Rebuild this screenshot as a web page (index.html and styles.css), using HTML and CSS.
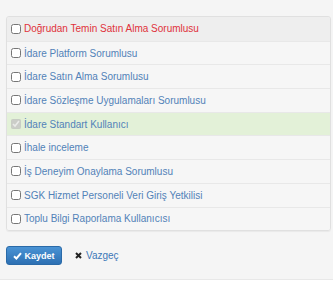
FILE: index.html
```html
<!DOCTYPE html>
<html>

<head>
    <meta name="viewport" content="width=device-width,initial-scale=1.0">
    <title>Roller</title>
    <link rel="stylesheet" href="styles.css">
</head>

<body>
    <div class="page">
        <div class="panel">
            <div class="row first"><label class="item danger"><input type="checkbox"> Doğrudan Temin Satın Alma Sorumlusu</label></div>
            <div class="row"><label class="item"><input type="checkbox"> İdare Platform Sorumlusu</label></div>
            <div class="row"><label class="item"><input type="checkbox"> İdare Satın Alma Sorumlusu</label></div>
            <div class="row"><label class="item"><input type="checkbox"> İdare Sözleşme Uygulamaları Sorumlusu</label></div>
            <div class="row success"><label class="item"><input type="checkbox" checked disabled> İdare Standart Kullanıcı</label></div>
            <div class="row"><label class="item"><input type="checkbox"> İhale inceleme</label></div>
            <div class="row"><label class="item"><input type="checkbox"> İş Deneyim Onaylama Sorumlusu</label></div>
            <div class="row"><label class="item"><input type="checkbox"> SGK Hizmet Personeli Veri Giriş Yetkilisi</label></div>
            <div class="row"><label class="item"><input type="checkbox"> Toplu Bilgi Raporlama Kullanıcısı</label></div>
        </div>

        <div class="actions">
            <button class="btn save">
                <svg class="check" width="9" height="8" viewBox="0 0 9 8"><path d="M1 4.2 L3.4 6.5 L8 1.2" fill="none" stroke="#ffffff" stroke-width="2"/></svg>
                Kaydet
            </button>
            <a class="cancel" href="#">
                <svg class="times" width="7" height="7" viewBox="0 0 7 7"><path d="M1 1 L6 6 M6 1 L1 6" stroke="#222222" stroke-width="2"/></svg>
                Vazgeç
            </a>
        </div>
    </div>
</body>

</html>
```

FILE: styles.css
```css
body {
    margin: 0;
    background-color: #ffffff;
    font-family: "Liberation Sans", Arial, sans-serif;
    font-size: 10px;
}

.page {
    background-color: #f5f5f5;
    border-bottom: 1px solid #e8e8e8;
    padding: 16px 2px 14px 6px;
}

.panel {
    border: 1px solid #e0e0e0;
    border-radius: 3px;
    box-shadow: 0 1px 1px rgba(0, 0, 0, 0.05);
    overflow: hidden;
}

.row {
    height: 22.7px;
    border-top: 1px solid #e8e8e8;
    display: flex;
    align-items: center;
    padding-left: 4px;
    background-color: #f6f6f6;
}

.row.first {
    border-top: none;
    height: 23.7px;
    background-color: #eeeeee;
}

.row.success {
    background-color: #e3f1d8;
}

.item {
    display: flex;
    align-items: center;
    color: #5282b8;
}

.item.danger {
    color: #e0323a;
}

.item input {
    width: 10px;
    height: 10px;
    margin: 0 3px 0 0;
}

.actions {
    display: flex;
    align-items: center;
    margin-top: 15px;
}

.btn {
    display: flex;
    align-items: center;
    justify-content: center;
    gap: 2px;
    font-family: "Liberation Sans", Arial, sans-serif;
    font-size: 9px;
    font-weight: bold;
    color: #ffffff;
    width: 56px;
    height: 19px;
    border: 1px solid #2a6aa8;
    border-radius: 3px;
    background-image: linear-gradient(#4a93d4, #2d70b3);
    padding: 0;
}

.cancel {
    display: flex;
    align-items: center;
    gap: 4px;
    margin-left: 13px;
    color: #3d78b8;
    text-decoration: none;
    font-size: 10px;
}
```
